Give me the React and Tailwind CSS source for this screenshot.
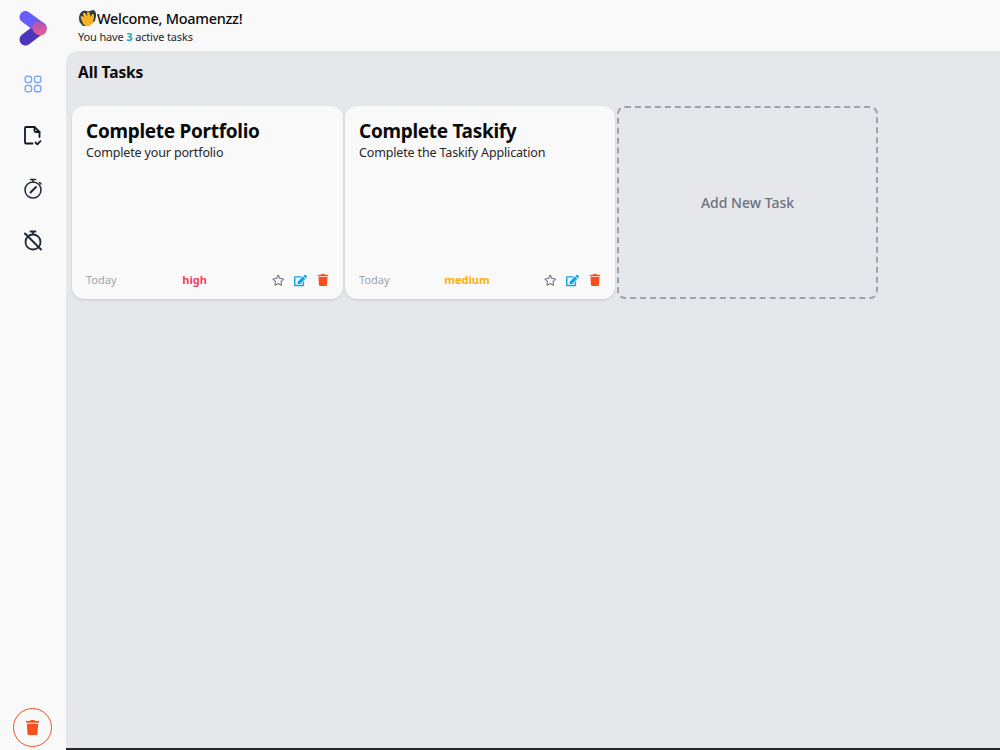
import { FaEdit, FaRegStar, FaTrash } from "react-icons/fa";

function Logo() {
  return (
    <svg width="30" height="36" viewBox="0 0 30 36" fill="none">
      <defs>
        <linearGradient id="logoDot" x1="0" y1="0" x2="1" y2="1">
          <stop offset="0" stopColor="#a94fc0" />
          <stop offset="1" stopColor="#ef5f86" />
        </linearGradient>
      </defs>
      <path d="M22.500 18 L7.500 29.500" stroke="#4c35b8" strokeWidth="12" strokeLinecap="round" />
      <path d="M7.500 7 L22.500 18" stroke="#6a5cf6" strokeWidth="12" strokeLinecap="round" />
      <ellipse cx="21.500" cy="18.500" rx="7.500" ry="6.500" transform="rotate(35 21.500 18.500)" fill="url(#logoDot)" />
    </svg>
  );
}

function GridIcon() {
  return (
    <svg width="18" height="18" viewBox="0 0 18 18" fill="none" stroke="#7aa7f7" strokeWidth="1.400">
      <rect x="1.200" y="1.200" width="6.300" height="6.300" rx="2" />
      <rect x="10.500" y="1.200" width="6.300" height="6.300" rx="2" />
      <rect x="1.200" y="10.500" width="6.300" height="6.300" rx="2" />
      <rect x="10.500" y="10.500" width="6.300" height="6.300" rx="2" />
    </svg>
  );
}

function FileCheckIcon() {
  return (
    <svg width="18" height="20" viewBox="0 0 18 20" fill="none" stroke="#111827" strokeWidth="1.800" strokeLinecap="round" strokeLinejoin="round">
      <path d="M8.500 17.500H2a1 1 0 0 1-1-1V2a1 1 0 0 1 1-1h8.500L15.500 6v5" />
      <path d="M10.500 1v3.500a1.500 1.500 0 0 0 1.500 1.500h3.500" />
      <path d="M11.500 16.500l1.800 1.800 3.200-3.200" />
    </svg>
  );
}

function StopwatchIcon() {
  return (
    <svg width="20" height="21" viewBox="0 0 20 21" fill="none" stroke="#1f2937" strokeWidth="1.500" strokeLinecap="round">
      <circle cx="10" cy="12" r="8" />
      <path d="M7.500 1.500h5M10 1.500V4M16.500 4.500l1.500 1.500" />
      <path d="M7.500 14.500L13 9" strokeWidth="2" />
    </svg>
  );
}

function StopwatchOffIcon() {
  return (
    <svg width="20" height="21" viewBox="0 0 20 21" fill="none" stroke="#1f2937" strokeWidth="1.800" strokeLinecap="round">
      <circle cx="10" cy="12" r="7.500" />
      <path d="M7.500 1.500h5M10 1.500V4" />
      <path d="M2 3.500l16 16" strokeWidth="2" />
    </svg>
  );
}

function ClapHands() {
  return (
    <svg width="19" height="19" viewBox="0 0 19 19" className="shrink-0">
      <path d="M1 9C1 5 4 1.500 7 1.500l3 1 5-1.500c2 0 3.500 3 3 6l-1 5-7 5H5L1.500 13z" fill="#2c3d45" />
      <path d="M3 9.500C2 7.500 3.500 6 5 7.500L6 8.500 5 5.500C4.500 4 6.500 3 7.500 4.500l2 3-.5-3C9 3 11 2.500 11.500 4l1.300 4 .7-2c.5-1.500 2.500-1.200 2.500.5 0 2.500-.3 5-1.500 7.500-1.500 3-5 4-7.500 2.500C4.500 15 3.800 11.500 3 9.500z" fill="#f7b21f" />
    </svg>
  );
}

function TaskCard({ title, description, priority, priorityClass, className }) {
  return (
    <div className={`flex h-[193px] flex-col justify-between rounded-xl bg-[#f9f9f9] px-[14px] pt-[12px] pb-[9px] shadow-sm ${className}`}>
      <div>
        <h2 className="text-[19px] leading-[26px] font-bold tracking-[-0.3px] text-[#0a0a0a]">{title}</h2>
        <p className="text-[12.500px] leading-[18px] tracking-[-0.15px] text-[#27272a]">{description}</p>
      </div>
      <div className="flex h-5 items-center">
        <span className="text-[11px] text-[#9ca3af]">Today</span>
        <span className={`flex-1 pl-[1px] text-center text-[11px] font-bold ${priorityClass}`}>{priority}</span>
        <div className="flex items-center gap-[10px]">
          <FaRegStar className="text-[12.500px] text-[#6b7280]" />
          <FaEdit className="text-[13px] text-[#0ea5e9]" />
          <FaTrash className="text-[12px] text-[#f4511e]" />
        </div>
      </div>
    </div>
  );
}

export default function App() {
  return (
    <div className="flex h-[750px] w-[1000px] overflow-hidden bg-[#f9f9f9] font-['Noto_Sans',sans-serif]">
      <aside className="flex w-[66px] shrink-0 flex-col items-center pt-[10px] pb-[3px]">
        <Logo />
        <nav className="mt-[28px] flex flex-col items-center gap-[32px]">
          <div className="flex h-[20px] items-center"><GridIcon /></div>
          <div className="flex h-[20px] items-center"><FileCheckIcon /></div>
          <div className="flex h-[20px] items-center"><StopwatchIcon /></div>
          <div className="flex h-[20px] items-center"><StopwatchOffIcon /></div>
        </nav>
        <button type="button" className="mt-auto mr-[1px] flex h-[39px] w-[39px] items-center justify-center rounded-full border-[1.500px] border-[#f4511e] bg-transparent">
          <FaTrash className="text-[15px] text-[#f4511e]" />
        </button>
      </aside>

      <div className="flex min-w-0 flex-1 flex-col">
        <header className="h-[51px] shrink-0 pt-[9px] pl-[12px]">
          <h1 className="flex items-center text-[14.500px] leading-[19px] font-medium tracking-[-0.3px] text-[#0a0a0a]"><ClapHands />Welcome, Moamenzz!</h1>
          <p className="text-[11px] leading-[18px] tracking-[-0.15px] text-[#27272a]">
            You have <span className="font-bold text-[#14a8b8]">3</span> active tasks
          </p>
        </header>

        <main className="flex-1 rounded-tl-xl border-b-2 border-[#27272a] bg-[#e5e7eb] pt-[11px] pl-[6px]">
          <h2 className="pl-[6px] text-[15.500px] leading-[20px] font-bold tracking-[-0.1px] text-[#0a0a0a]">All Tasks</h2>
          <div className="mt-[24px] flex gap-[2px]">
            <TaskCard title="Complete Portfolio" description="Complete your portfolio" priority="high" priorityClass="text-[#f43f5e]" className="w-[271px]" />
            <TaskCard title="Complete Taskify" description="Complete the Taskify Application" priority="medium" priorityClass="text-[#fbb006]" className="w-[270px]" />
            <button type="button" className="flex h-[193px] w-[261px] items-center justify-center rounded-lg border-2 border-dashed border-[#9ca3af] text-[14px] font-medium text-[#6b7280]">
              Add New Task
            </button>
          </div>
        </main>
      </div>
    </div>
  );
}
